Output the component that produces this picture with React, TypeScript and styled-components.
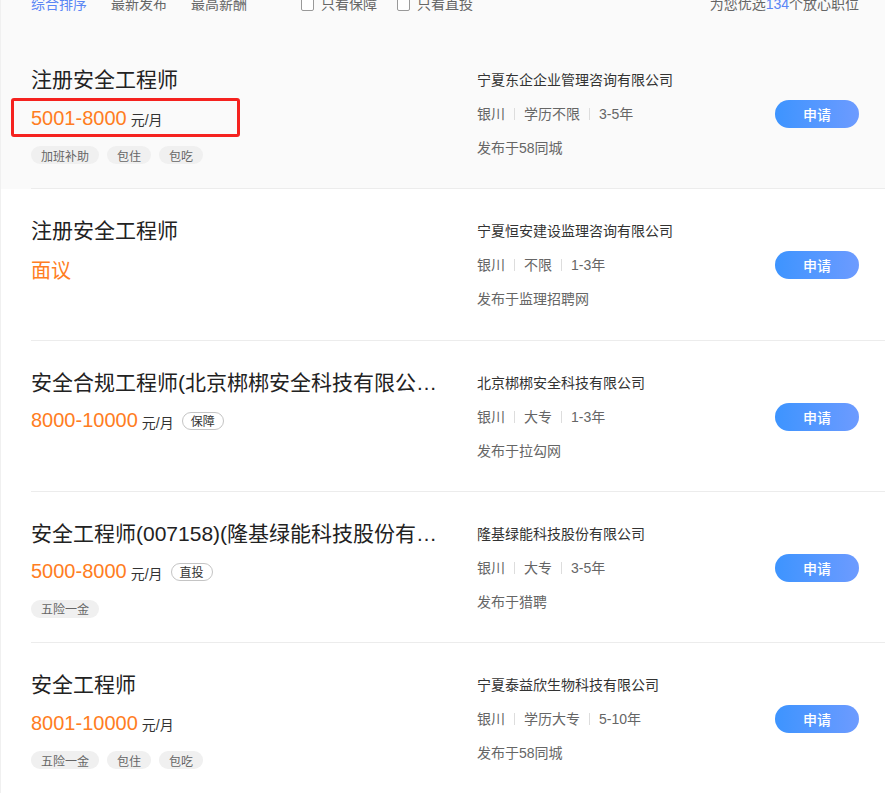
import React from "react";
import styled, { createGlobalStyle, css } from "styled-components";

const GlobalStyle = createGlobalStyle`
  html, body { margin: 0; padding: 0; background: #fff; }
  body {
    font-family: "Liberation Sans", "Noto Sans CJK SC", sans-serif;
    color: #333;
    overflow: hidden;
  }
  *, *::before, *::after { box-sizing: border-box; }
`;

const Page = styled.div`
  width: 885px;
  height: 793px;
  overflow: hidden;
  border-left: 1px solid #f0f0f0;
  background: #fff;
`;

const Toolbar = styled.div`
  display: flex;
  align-items: flex-start;
  height: 44px;
  margin-top: -6px;
  padding: 0 26px 0 30px;
  background: #fafafa;
  font-size: 14px;
  line-height: 20px;
  color: #666;
`;

const SortGroup = styled.div`
  display: flex;
  gap: 24px;
`;

const SortItem = styled.span<{ $active?: boolean }>`
  color: ${(p) => (p.$active ? "#5b86f5" : "#666")};
  cursor: pointer;
`;

const FilterGroup = styled.div`
  display: flex;
  gap: 20px;
  margin-left: 54px;
`;

const FilterLabel = styled.label`
  display: flex;
  align-items: center;
  gap: 7px;
  color: #666;
`;

const CheckBox = styled.span`
  width: 13px;
  height: 13px;
  border: 1px solid #999;
  border-radius: 2px;
  background: #fff;
  margin-top: 1px;
`;

const Summary = styled.div`
  margin-left: auto;
  color: #666;
`;

const Count = styled.span`
  color: #5b86f5;
`;

const JobCard = styled.div<{ $active?: boolean }>`
  background: ${(p) => (p.$active ? "#fafafa" : "#fff")};
`;

const CardInner = styled.div`
  position: relative;
  display: flex;
  height: 151.33px;
  margin-left: 30px;
  padding: 28px 26px 0 0;
  border-bottom: 1px solid #ececec;
`;

const LeftCol = styled.div`
  width: 410px;
  margin-right: 36px;
  flex-shrink: 0;
`;

const Title = styled.div`
  font-size: 21px;
  line-height: 28px;
  color: #222;
  white-space: nowrap;
  overflow: hidden;
  text-overflow: ellipsis;
`;

const SalaryRow = styled.div<{ $highlight?: boolean }>`
  position: relative;
  display: flex;
  align-items: center;
  height: 28px;
  margin-top: 10px;
  ${(p) =>
    p.$highlight &&
    css`
      &::after {
        content: "";
        position: absolute;
        left: -20px;
        top: -6px;
        width: 229px;
        height: 39px;
        border: 3px solid #f5221f;
        border-radius: 3px;
        pointer-events: none;
      }
    `}
`;

const Salary = styled.span`
  font-size: 20px;
  color: #ff7d22;
`;

const Unit = styled.span`
  font-size: 14px;
  color: #333;
  margin-left: 4px;
  margin-top: 2px;
`;

const Badge = styled.span`
  display: inline-flex;
  align-items: center;
  height: 18px;
  padding: 0 8px;
  margin-left: 8px;
  border: 1px solid #c4c4c4;
  border-radius: 9px;
  font-size: 12px;
  color: #333;
`;

const TagRow = styled.div`
  display: flex;
  gap: 8px;
  margin-top: 14px;
`;

const Tag = styled.span`
  display: inline-flex;
  align-items: center;
  height: 18px;
  padding: 0 10px;
  border-radius: 9px;
  background: #f0f0f0;
  font-size: 12px;
  color: #666;
`;

const RightCol = styled.div`
  flex: 1;
  min-width: 0;
`;

const Company = styled.div`
  margin-top: 4px;
  font-size: 14px;
  line-height: 20px;
  color: #333;
`;

const Meta = styled.div`
  display: flex;
  align-items: center;
  margin-top: 14px;
  font-size: 14px;
  line-height: 20px;
  color: #666;
`;

const Sep = styled.span`
  width: 1px;
  height: 12px;
  margin: 0 9px;
  background: #ddd;
`;

const Source = styled.div`
  margin-top: 14px;
  font-size: 14px;
  line-height: 20px;
  color: #666;
`;

const ApplyButton = styled.button`
  flex-shrink: 0;
  width: 84px;
  height: 28px;
  margin-top: 34px;
  border: none;
  border-radius: 14px;
  background: linear-gradient(90deg, #3d94ff 0%, #6d9bff 100%);
  color: #fff;
  font-family: "Noto Sans CJK SC", sans-serif;
  font-size: 14px;
  font-weight: 500;
  cursor: pointer;
`;

type Job = {
  title: string;
  salary: string;
  unit?: string;
  badge?: string;
  tags: string[];
  company: string;
  meta: string[];
  source: string;
  active?: boolean;
  highlight?: boolean;
};

const jobs: Job[] = [
  {
    title: "注册安全工程师",
    salary: "5001-8000",
    unit: "元/月",
    tags: ["加班补助", "包住", "包吃"],
    company: "宁夏东企企业管理咨询有限公司",
    meta: ["银川", "学历不限", "3-5年"],
    source: "发布于58同城",
    active: true,
    highlight: true,
  },
  {
    title: "注册安全工程师",
    salary: "面议",
    tags: [],
    company: "宁夏恒安建设监理咨询有限公司",
    meta: ["银川", "不限", "1-3年"],
    source: "发布于监理招聘网",
  },
  {
    title: "安全合规工程师(北京梆梆安全科技有限公司)",
    salary: "8000-10000",
    unit: "元/月",
    badge: "保障",
    tags: [],
    company: "北京梆梆安全科技有限公司",
    meta: ["银川", "大专", "1-3年"],
    source: "发布于拉勾网",
  },
  {
    title: "安全工程师(007158)(隆基绿能科技股份有限公司)",
    salary: "5000-8000",
    unit: "元/月",
    badge: "直投",
    tags: ["五险一金"],
    company: "隆基绿能科技股份有限公司",
    meta: ["银川", "大专", "3-5年"],
    source: "发布于猎聘",
  },
  {
    title: "安全工程师",
    salary: "8001-10000",
    unit: "元/月",
    tags: ["五险一金", "包住", "包吃"],
    company: "宁夏泰益欣生物科技有限公司",
    meta: ["银川", "学历大专", "5-10年"],
    source: "发布于58同城",
  },
];

export default function App() {
  return (
    <>
      <GlobalStyle />
      <Page>
        <Toolbar>
          <SortGroup>
            <SortItem $active>综合排序</SortItem>
            <SortItem>最新发布</SortItem>
            <SortItem>最高薪酬</SortItem>
          </SortGroup>
          <FilterGroup>
            <FilterLabel>
              <CheckBox />
              只看保障
            </FilterLabel>
            <FilterLabel>
              <CheckBox />
              只看直投
            </FilterLabel>
          </FilterGroup>
          <Summary>
            为您优选<Count>134</Count>个放心职位
          </Summary>
        </Toolbar>
        {jobs.map((job, i) => (
          <JobCard key={i} $active={job.active}>
            <CardInner>
              <LeftCol>
                <Title>{job.title}</Title>
                <SalaryRow $highlight={job.highlight}>
                  <Salary>{job.salary}</Salary>
                  {job.unit && <Unit>{job.unit}</Unit>}
                  {job.badge && <Badge>{job.badge}</Badge>}
                </SalaryRow>
                {job.tags.length > 0 && (
                  <TagRow>
                    {job.tags.map((t) => (
                      <Tag key={t}>{t}</Tag>
                    ))}
                  </TagRow>
                )}
              </LeftCol>
              <RightCol>
                <Company>{job.company}</Company>
                <Meta>
                  {job.meta.map((m, j) => (
                    <React.Fragment key={j}>
                      {j > 0 && <Sep />}
                      <span>{m}</span>
                    </React.Fragment>
                  ))}
                </Meta>
                <Source>{job.source}</Source>
              </RightCol>
              <ApplyButton>申请</ApplyButton>
            </CardInner>
          </JobCard>
        ))}
      </Page>
    </>
  );
}
